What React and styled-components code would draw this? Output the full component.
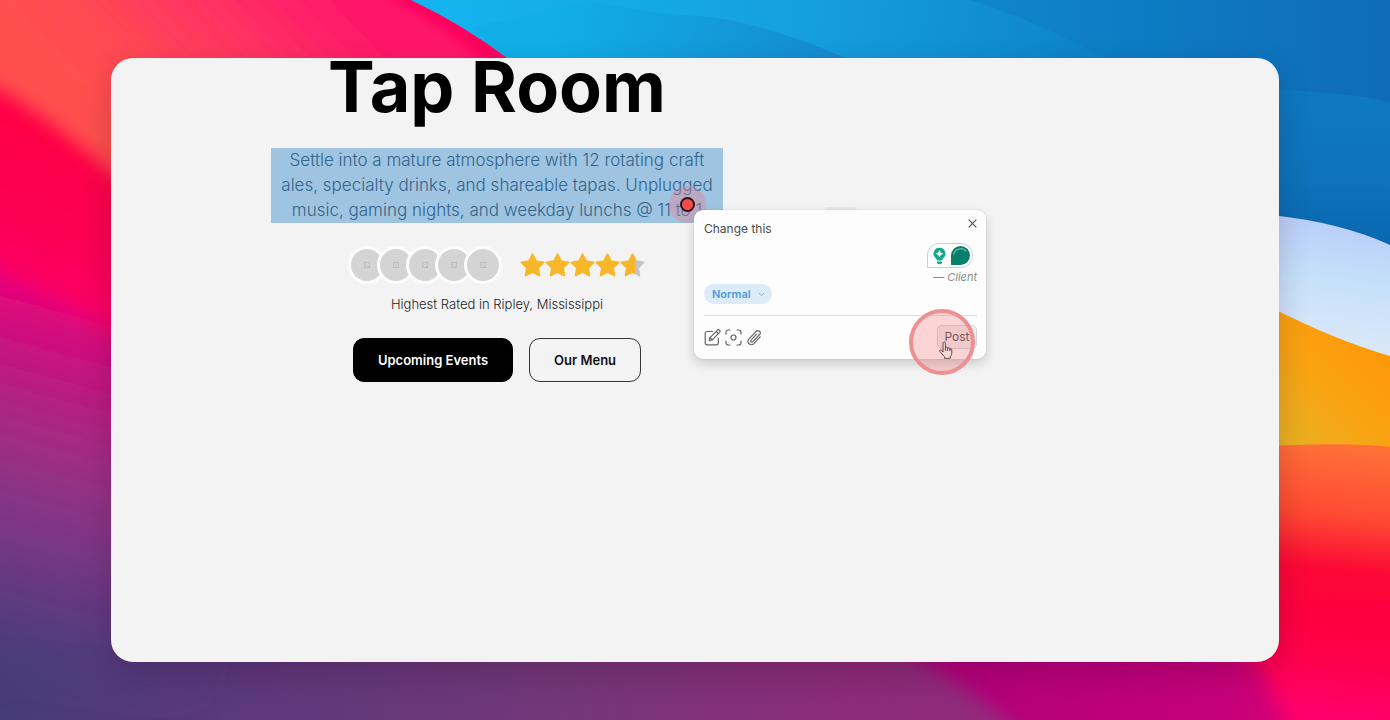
import React from "react";
import styled, { createGlobalStyle } from "styled-components";

const GlobalStyle = createGlobalStyle`
  *, *::before, *::after { box-sizing: border-box; }
  body { margin: 0; font-family: Inter, "Liberation Sans", sans-serif; }
  button, select, textarea { font: inherit; }
`;

const Desktop = styled.div`
  position: relative;
  display: flex;
  min-height: 100vh;
  padding: 58px 111px;
  overflow: hidden;
`;

const WallpaperSvg = styled.svg`
  position: absolute;
  inset: 0;
  width: 100%;
  height: 100%;
`;

const Panel = styled.main`
  position: relative;
  flex: 1;
  padding: 0 160px 80px;
  border-radius: 22px;
  background: #f3f3f3;
  box-shadow: 0 12px 32px rgba(40, 0, 30, 0.2);
`;

const Hero = styled.section`
  display: flex;
  flex-direction: column;
  align-items: center;
  width: 452px;
`;

const Title = styled.h1`
  margin: 0;
  font-size: 70px;
  line-height: 58px;
  font-weight: 700;
  white-space: nowrap;
  color: #000;
`;

const Selection = styled.div`
  position: relative;
  width: 100%;
  margin-top: 32px;
  background: #9fc4e2;
`;

const Lead = styled.p`
  margin: 0;
  font-size: 17px;
  line-height: 25px;
  font-weight: 300;
  text-align: center;
  white-space: nowrap;
  color: #33658b;
`;

const Marker = styled.span`
  position: absolute;
  left: 398px;
  top: 38px;
  display: grid;
  place-items: center;
  width: 37px;
  height: 37px;
  border-radius: 50%;
  background: rgba(240, 120, 140, 0.35);
  &::after {
    content: "";
    width: 15px;
    height: 15px;
    border: 2px solid #20181c;
    border-radius: 50%;
    background: #fb4a4c;
  }
`;

const Social = styled.div`
  display: flex;
  align-items: center;
  gap: 18px;
  margin-top: 23px;
  padding-right: 2px;
`;

const Avatars = styled.div`
  display: flex;
`;

const Avatar = styled.span`
  display: grid;
  place-items: center;
  width: 38px;
  height: 38px;
  border: 3px solid #fcfcfc;
  border-radius: 50%;
  background: #d4d4d4;
  & + & { margin-left: -9px; }
`;

const Stars = styled.div`
  display: flex;
`;

const Caption = styled.p`
  margin: 12px 0 0;
  font-size: 13px;
  line-height: 16px;
  font-weight: 300;
  color: #1c2224;
`;

const Actions = styled.div`
  display: flex;
  gap: 16px;
  margin-top: 26px;
`;

const ActionLink = styled.a`
  padding: 13px 24px;
  border: 1px solid ${(p) => (p.$solid ? "#000" : "#333")};
  border-radius: 11px;
  background: ${(p) => (p.$solid ? "#000" : "transparent")};
  color: ${(p) => (p.$solid ? "#fff" : "#111")};
  font-size: 13px;
  line-height: 16px;
  font-weight: 600;
  text-decoration: none;
`;

const Handle = styled.span`
  position: absolute;
  left: 554px;
  top: 59px;
  width: 32px;
  height: 6px;
  border-radius: 3px;
  background: #e9e9e9;
`;

const Comment = styled.form`
  position: absolute;
  left: 423px;
  top: 62px;
  display: flex;
  flex-direction: column;
  width: 292px;
  padding: 9px 9px 10px 10px;
  border-radius: 9px;
  background: #fdfdfd;
  box-shadow: 0 5px 12px rgba(0, 0, 0, 0.16), 0 0 2px rgba(0, 0, 0, 0.12);
`;

const CommentTop = styled.div`
  display: flex;
  align-items: flex-start;
  height: 24px;
`;

const CommentInput = styled.textarea`
  flex: 1;
  height: 20px;
  padding: 0;
  border: 0;
  outline: 0;
  resize: none;
  overflow: hidden;
  background: transparent;
  font-size: 12px;
  line-height: 20px;
  color: #4b4b4b;
`;

const IconButton = styled.button`
  display: grid;
  place-items: center;
  width: ${(p) => p.$size}px;
  height: ${(p) => p.$size}px;
  padding: 0;
  border: 0;
  background: transparent;
  color: #555;
`;

const Assistant = styled.div`
  display: flex;
  align-self: flex-end;
  align-items: center;
  justify-content: space-between;
  width: 46px;
  height: 25px;
  margin-right: 4px;
  padding: 0 2px 0 5px;
  border: 1px solid #ccd0d2;
  border-radius: 12px 12px 12px 0;
  background: #fff;
`;

const Author = styled.span`
  align-self: flex-end;
  margin-top: 2px;
  font-size: 11px;
  line-height: 14px;
  font-style: italic;
  color: #8b8b8b;
`;

const Priority = styled.label`
  position: relative;
  align-self: flex-start;
  color: #7fb0d8;
  svg { position: absolute; right: 7px; top: 7px; pointer-events: none; }
`;

const PrioritySelect = styled.select`
  display: block;
  width: 68px;
  height: 20px;
  padding: 0 0 0 8px;
  appearance: none;
  border: 0;
  border-radius: 10px;
  background: #dcebf8;
  color: #4f9bdb;
  font-size: 11px;
  line-height: 20px;
  font-weight: 600;
`;

const CommentFooter = styled.div`
  display: flex;
  align-items: center;
  justify-content: space-between;
  margin-top: 11px;
  padding-top: 9px;
  border-top: 1px solid #dedede;
`;

const Tools = styled.div`
  display: flex;
  gap: 4px;
`;

const PostButton = styled.button`
  width: 40px;
  height: 24px;
  padding: 0;
  border: 1px solid #d5d5d5;
  border-radius: 5px;
  background: #eee;
  color: #555;
  font-size: 12px;
  line-height: 20px;
`;

const ClickRing = styled.span`
  position: absolute;
  left: 215px;
  top: 99px;
  width: 66px;
  height: 66px;
  border: 4px solid #ee8f90;
  border-radius: 50%;
  background: rgba(245, 85, 90, 0.24);
  pointer-events: none;
  svg { position: absolute; left: 25px; top: 28px; }
`;

const starPath = "M12.5 1.4 15.9 8.3 23.5 9.4 18 14.8 19.3 22.4 12.5 18.8 5.7 22.4 7 14.8 1.5 9.4 9.1 8.3Z";

function Star({ half }) {
  const paint = half ? "url(#halfStar)" : "#f8b728";
  return (
    <svg width="25" height="25" viewBox="0 0 25 25" aria-hidden="true">
      {half && (
        <defs>
          <linearGradient id="halfStar">
            <stop offset="60%" stopColor="#f8b728" />
            <stop offset="60%" stopColor="#c4c4c4" />
          </linearGradient>
        </defs>
      )}
      <path d={starPath} fill={paint} stroke={paint} strokeWidth="2" strokeLinejoin="round" />
    </svg>
  );
}

function Wallpaper() {
  return (
    <WallpaperSvg viewBox="0 0 1390 720" preserveAspectRatio="none" aria-hidden="true">
      <defs>
        <linearGradient id="base" x1="0" y1="0" x2="1390" y2="0" gradientUnits="userSpaceOnUse">
          <stop offset="0" stopColor="#463c78" />
          <stop offset=".12" stopColor="#57397c" />
          <stop offset=".4" stopColor="#733779" />
          <stop offset=".6" stopColor="#8c2c7a" />
          <stop offset="1" stopColor="#a0247a" />
        </linearGradient>
        <linearGradient id="leftBands" x1="60" y1="285" x2="-40" y2="650" gradientUnits="userSpaceOnUse">
          <stop offset="0" stopColor="#ed0078" />
          <stop offset=".17" stopColor="#c9107f" />
          <stop offset=".4" stopColor="#a42c84" />
          <stop offset=".62" stopColor="#803685" />
          <stop offset=".85" stopColor="#5b3a80" />
          <stop offset="1" stopColor="#463d79" />
        </linearGradient>
        <linearGradient id="redBand" x1="50" y1="130" x2="-10" y2="290" gradientUnits="userSpaceOnUse">
          <stop offset="0" stopColor="#ff0046" />
          <stop offset=".6" stopColor="#fb0055" />
          <stop offset="1" stopColor="#fc006c" />
        </linearGradient>
        <linearGradient id="coral" x1="110" y1="120" x2="300" y2="-60" gradientUnits="userSpaceOnUse">
          <stop offset="0" stopColor="#ff504e" />
          <stop offset=".25" stopColor="#ff4754" />
          <stop offset=".6" stopColor="#ff3164" />
          <stop offset="1" stopColor="#ff146a" />
        </linearGradient>
        <linearGradient id="blue" x1="430" y1="0" x2="1390" y2="90" gradientUnits="userSpaceOnUse">
          <stop offset="0" stopColor="#14b5ee" />
          <stop offset=".4" stopColor="#159ee0" />
          <stop offset=".7" stopColor="#0d82ca" />
          <stop offset="1" stopColor="#0f6db9" />
        </linearGradient>
        <linearGradient id="wave" x1="560" y1="0" x2="860" y2="60" gradientUnits="userSpaceOnUse">
          <stop offset="0" stopColor="#10aee9" />
          <stop offset="1" stopColor="#1683c7" />
        </linearGradient>
        <linearGradient id="wave2" x1="960" y1="0" x2="1390" y2="0" gradientUnits="userSpaceOnUse">
          <stop offset="0" stopColor="#1087cc" />
          <stop offset=".45" stopColor="#0d7bc3" />
          <stop offset="1" stopColor="#106bb8" />
        </linearGradient>
        <linearGradient id="lowerBlue" x1="0" y1="90" x2="0" y2="240" gradientUnits="userSpaceOnUse">
          <stop offset="0" stopColor="#0e79c1" />
          <stop offset=".6" stopColor="#0d73ba" />
          <stop offset="1" stopColor="#0968b1" />
        </linearGradient>
        <linearGradient id="white" x1="1290" y1="212" x2="1270" y2="345" gradientUnits="userSpaceOnUse">
          <stop offset="0" stopColor="#b9cdf9" />
          <stop offset=".45" stopColor="#c5e0fa" />
          <stop offset="1" stopColor="#dde9f8" />
        </linearGradient>
        <linearGradient id="amber" x1="1380" y1="350" x2="1290" y2="440" gradientUnits="userSpaceOnUse">
          <stop offset="0" stopColor="#ff980a" />
          <stop offset=".5" stopColor="#f9a312" />
          <stop offset="1" stopColor="#ebb021" />
        </linearGradient>
        <linearGradient id="rightRed" x1="1340" y1="445" x2="1310" y2="720" gradientUnits="userSpaceOnUse">
          <stop offset="0" stopColor="#ff7038" />
          <stop offset=".25" stopColor="#ff4b33" />
          <stop offset=".45" stopColor="#fc0836" />
          <stop offset=".75" stopColor="#ff0048" />
          <stop offset="1" stopColor="#ff0070" />
        </linearGradient>
        <linearGradient id="bottomMagenta" x1="900" y1="690" x2="1330" y2="600" gradientUnits="userSpaceOnUse">
          <stop offset="0" stopColor="#b0007b" />
          <stop offset=".7" stopColor="#c4007a" />
          <stop offset="1" stopColor="#e8086f" />
        </linearGradient>
        <filter id="soft" x="-20%" y="-20%" width="140%" height="140%">
          <feGaussianBlur stdDeviation="9" />
        </filter>
        <filter id="softer" x="-20%" y="-20%" width="140%" height="140%">
          <feGaussianBlur stdDeviation="20" />
        </filter>
        <filter id="edge" x="-20%" y="-20%" width="140%" height="140%">
          <feGaussianBlur stdDeviation="5" />
        </filter>
      </defs>
      <rect width="1390" height="720" fill="url(#base)" />
      <path d="M-80 180 L260 360 L190 690 L-80 650Z" fill="url(#leftBands)" filter="url(#softer)" />
      <path d="M-60 60 L-60 240 L0 270 L115 330 L420 480 L420 60Z" fill="url(#redBand)" filter="url(#soft)" />
      <path d="M-60 60 L0 90 Q60 125 130 190 L600 400 L600 -60 L-60 -60Z" fill="url(#coral)" filter="url(#soft)" />
      <path d="M340 -30 L415 -30 L540 90 L510 82 Q455 34 405 6Z" fill="#ff005d" filter="url(#edge)" />
      <path d="M411 0 Q462 24 510 60 H1390 V0Z" fill="url(#blue)" />
      <path d="M590 0 Q635 12 700 16 Q765 22 850 60 H511 L470 28Z" fill="url(#wave)" opacity=".8" />
      <path d="M970 0 Q1030 18 1105 58 L1270 260 H1390 V0Z" fill="url(#wave2)" />
      <path d="M1270 90 Q1340 91 1390 102 V260 H1270Z" fill="url(#lowerBlue)" />
      <path d="M1270 215 Q1340 222 1390 245 V370 H1270Z" fill="url(#white)" />
      <path d="M1270 307 Q1335 340 1390 356 V460 H1270Z" fill="url(#amber)" />
      <path d="M850 630 Q950 665 1030 740 H1410 V600 H850Z" fill="url(#bottomMagenta)" filter="url(#soft)" />
      <path d="M1230 500 V640 Q1270 665 1300 760 H1430 V500Z" fill="url(#rightRed)" filter="url(#soft)" />
      <path d="M1270 446 Q1350 442 1390 447 V600 H1270Z" fill="url(#rightRed)" />
    </WallpaperSvg>
  );
}

function Picture() {
  return (
    <svg width="6" height="6" viewBox="0 0 6 6" fill="none" stroke="#bfbfbf" aria-hidden="true">
      <rect x=".5" y=".5" width="5" height="5" />
      <path d="m1 4 1.5-1.5L5 5" />
    </svg>
  );
}

export default function App() {
  return (
    <Desktop>
      <GlobalStyle />
      <Wallpaper />
      <Panel>
        <Hero>
          <Title>Tap Room</Title>
          <Selection>
            <Lead>
              Settle into a mature atmosphere with 12 rotating craft<br />
              ales, specialty drinks, and shareable tapas. Unplugged<br />
              music, gaming nights, and weekday lunchs @ 11 to 1
            </Lead>
            <Marker />
            <Handle />
            <Comment onSubmit={(e) => e.preventDefault()}>
              <CommentTop>
                <CommentInput aria-label="Comment" defaultValue="Change this" spellCheck={false} />
                <IconButton type="button" aria-label="Close" $size={9}>
                  <svg width="9" height="9" viewBox="0 0 9 9" stroke="currentColor" strokeWidth="1.2">
                    <path d="M.7.7 8.3 8.3M8.3.7.7 8.3" />
                  </svg>
                </IconButton>
              </CommentTop>
              <Assistant>
                <svg width="13" height="18" viewBox="0 0 13 18" aria-hidden="true">
                  <path d="M6.5.8a6 6 0 0 0-3.6 10.8c.7.5 1 1 1 1.8h5.2c0-.8.3-1.3 1-1.8A6 6 0 0 0 6.5.8Z" fill="#12a888" />
                  <path d="M4 14.6h5v.6a2 2 0 0 1-2 2H6a2 2 0 0 1-2-2Z" fill="#12a888" />
                  <path d="m6.5 3 1.3 2.5 2.5 1.3-2.5 1.3-1.3 2.5-1.3-2.5-2.5-1.3 2.5-1.3Z" fill="#fff" />
                </svg>
                <svg width="19" height="19" viewBox="0 0 19 19" aria-hidden="true">
                  <path d="M9.5 0A9.5 9.5 0 1 1 9.5 19H0V9.5A9.5 9.5 0 0 1 9.5 0Z" fill="#087f6d" />
                  <path d="M2.7 8.5a7 7 0 0 1 12-3.5" fill="none" stroke="#68b8a8" strokeWidth="1.2" strokeLinecap="round" />
                </svg>
              </Assistant>
              <Author>— Client</Author>
              <Priority>
                <PrioritySelect aria-label="Priority" defaultValue="Normal">
                  <option>Normal</option>
                </PrioritySelect>
                <svg width="7" height="7" viewBox="0 0 7 7" fill="none" stroke="currentColor">
                  <path d="m1 2 2.5 2.8L6 2" />
                </svg>
              </Priority>
              <CommentFooter>
                <Tools>
                  <IconButton type="button" aria-label="Edit" $size={17}>
                    <svg width="17" height="17" viewBox="0 0 17 17" fill="none" stroke="#666" strokeWidth="1.2" strokeLinejoin="round" strokeLinecap="round">
                      <path d="M8.5 2.5H3A1.8 1.8 0 0 0 1.2 4.3V14A1.8 1.8 0 0 0 3 15.8h9.5a1.8 1.8 0 0 0 1.8-1.8V9" />
                      <path d="M5.2 11.8 6 8.6 13.3 1.3a1.5 1.5 0 0 1 2.3 2.1L8.3 10.8Z" />
                      <path d="m12.2 2.5 2.2 2.1M6 8.6l2.3 2.2" />
                    </svg>
                  </IconButton>
                  <IconButton type="button" aria-label="Screenshot" $size={17}>
                    <svg width="17" height="17" viewBox="0 0 17 17" fill="none" stroke="#666" strokeWidth="1.2" strokeLinecap="round">
                      <path d="M1 5V3.2A2.2 2.2 0 0 1 3.2 1H5M12 1h1.8A2.2 2.2 0 0 1 16 3.2V5M16 12v1.8a2.2 2.2 0 0 1-2.2 2.2H12M5 16H3.2A2.2 2.2 0 0 1 1 13.8V12" />
                      <circle cx="8.5" cy="8.5" r="2.5" />
                    </svg>
                  </IconButton>
                  <IconButton type="button" aria-label="Attach" $size={17}>
                    <svg width="17" height="17" viewBox="0 0 17 17" fill="none" stroke="#666" strokeWidth="1.2" strokeLinecap="round" strokeLinejoin="round">
                      <path d="m10.500 5.200-5.400 5.900a1.200 1.200 0 0 0 1.700 1.700l6.800-7.300a2.300 2.300 0 0 0-3.400-3.200L3 9.900a3.400 3.400 0 0 0 4.900 4.800l6.300-6.800" />
                    </svg>
                  </IconButton>
                </Tools>
                <PostButton type="submit">Post</PostButton>
              </CommentFooter>
              <ClickRing>
                <svg width="16" height="18" viewBox="0 0 16 18" fill="#fbdada" stroke="#5f484c" strokeWidth="1" strokeLinejoin="round" aria-hidden="true">
                  <path d="M5 11V2.3a1.2 1.2 0 0 1 2.4 0V7.2a1.1 1.1 0 0 1 2.2 0v.6a1.1 1.1 0 0 1 2.2.2v.6a1 1 0 0 1 2 .3V12c0 2-1 2.8-1.4 3.5v1.8H6.5v-1.5L2 10.7c-1-1.3.5-2.4 1.6-1.4Z" />
                  <path d="M7.4 7v3M9.6 7.5V10M11.8 8.2v2" />
                </svg>
              </ClickRing>
            </Comment>
          </Selection>
          <Social>
            <Avatars>
              {[1, 2, 3, 4, 5].map((n) => (
                <Avatar key={n}><Picture /></Avatar>
              ))}
            </Avatars>
            <Stars role="img" aria-label="4.5 out of 5 stars">
              <Star /><Star /><Star /><Star /><Star half />
            </Stars>
          </Social>
          <Caption>Highest Rated in Ripley, Mississippi</Caption>
          <Actions>
            <ActionLink href="#events" $solid>Upcoming Events</ActionLink>
            <ActionLink href="#menu">Our Menu</ActionLink>
          </Actions>
        </Hero>
      </Panel>
    </Desktop>
  );
}
